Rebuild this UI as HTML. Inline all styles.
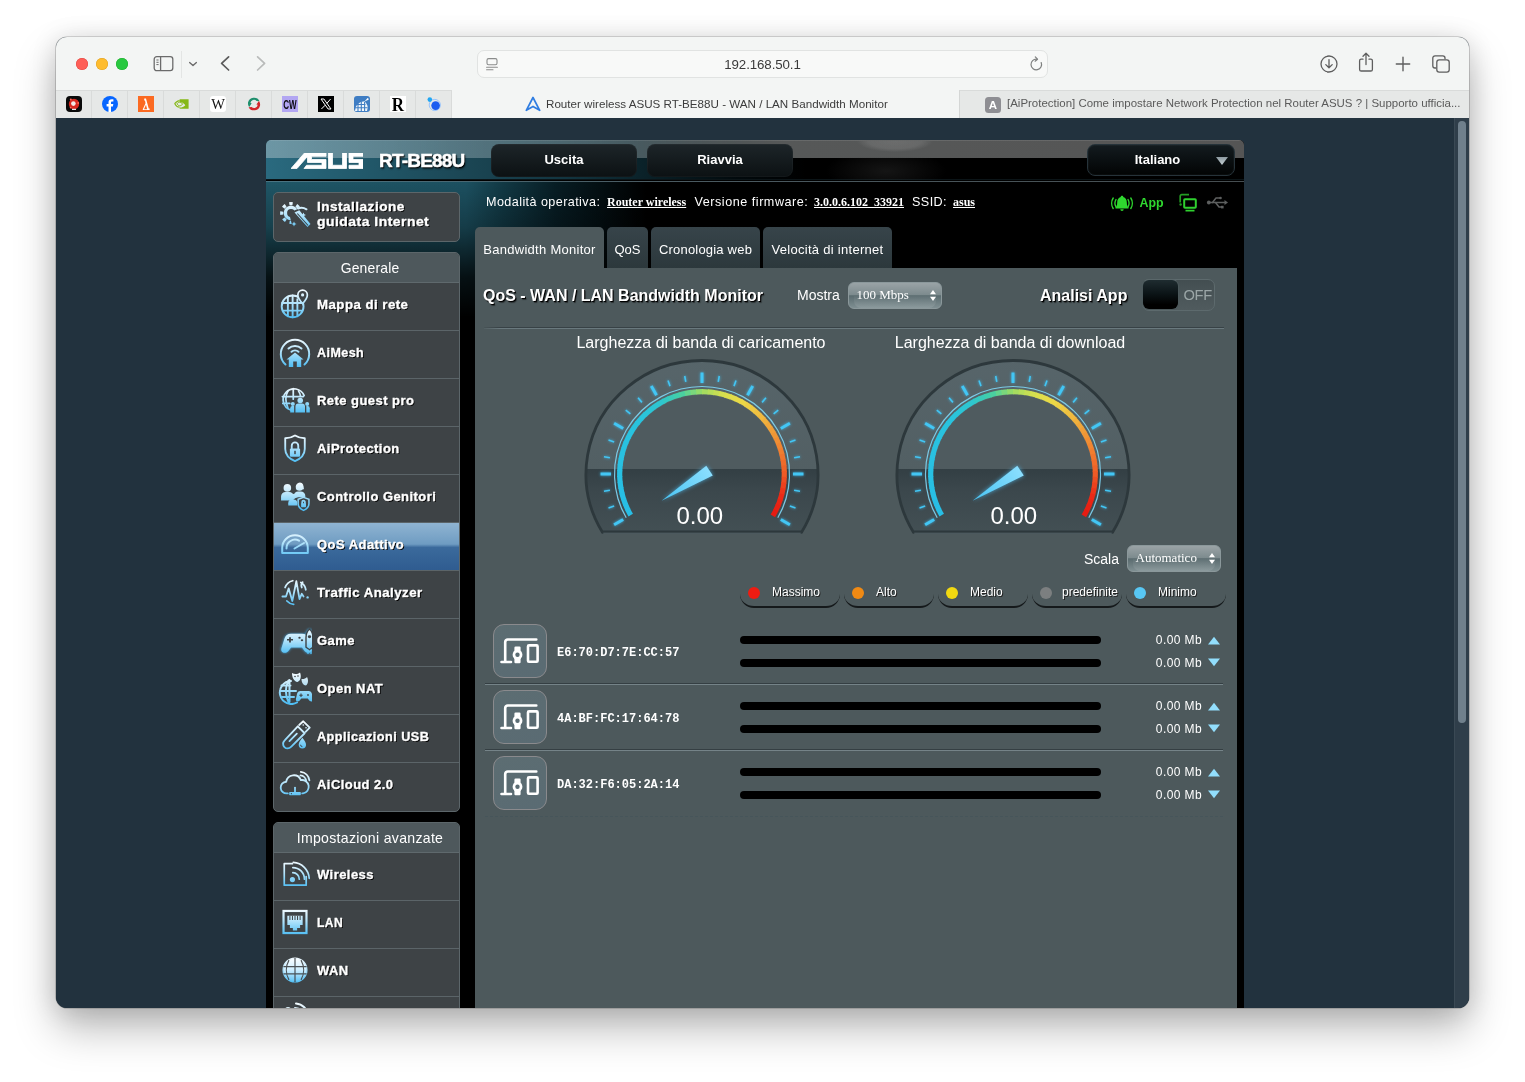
<!DOCTYPE html>
<html>
<head>
<meta charset="utf-8">
<title>Router wireless ASUS RT-BE88U - WAN / LAN Bandwidth Monitor</title>
<style>
*{box-sizing:border-box;margin:0;padding:0}
html,body{width:1525px;height:1082px;overflow:hidden;background:#fff;font-family:"Liberation Sans",sans-serif;}
.abs{position:absolute}
#win{position:absolute;left:56px;top:37px;width:1413px;height:971px;border-radius:11px;background:#22323e;
 box-shadow:0 0 0 .6px rgba(0,0,0,.28),0 21px 42px rgba(0,0,0,.27),0 2px 26px rgba(0,0,0,.13);}
#clip{position:absolute;inset:0;border-radius:11px;overflow:hidden;will-change:transform}
/* safari chrome */
#toolbar{position:absolute;left:0;top:0;width:1413px;height:54px;background:#f3f5f4;border-bottom:1px solid #d9dbda}
#tabbar{position:absolute;left:0;top:54px;width:1413px;height:27px;background:#e6e8e7;}
.tl{position:absolute;top:21px;width:12px;height:12px;border-radius:50%}
.pin{position:absolute;top:0;width:36px;height:27px;border-right:1px solid #d9dbda}
.pin>*{position:absolute;left:10px;top:5px;width:16px;height:16px}
#urlbar{position:absolute;left:421px;top:13px;width:571px;height:28px;border-radius:7px;background:#f8f9f8;border:1px solid #e1e3e2}
/* page */
#page{position:absolute;left:0;top:81px;width:1413px;height:890px;background:#22323e;overflow:hidden}
#sbtrack{position:absolute;left:1398px;top:0;width:15px;height:890px;background:#2f3e4a;border-left:1px solid #3a4954}
#sbthumb{position:absolute;left:1402px;top:3px;width:8px;height:602px;border-radius:4px;background:#70808c}

/* router */
#rt{position:absolute;left:210px;top:22px;width:978px;height:900px;background:#000;border-radius:5px 5px 0 0;overflow:hidden;font-family:"Liberation Sans",sans-serif;color:#fff}
#hd{position:absolute;left:0;top:0;width:979px;height:40px;
 background:linear-gradient(to right,#2a6a7f 0,#225a6c 90px,#1b4654 200px,#123540 300px,#081c22 400px,#020a0d 470px,#000 540px);
 border-bottom:1px solid #0b1417}
#hd:before{content:"";position:absolute;left:0;top:0;width:979px;height:17px;
 background:radial-gradient(ellipse 38px 11px at 629px 0,rgba(255,255,255,.13) 0,rgba(255,255,255,.1) 70%,rgba(255,255,255,0) 100%),
 linear-gradient(to right,rgba(175,195,202,.50) 0,rgba(150,172,180,.46) 200px,rgba(120,135,140,.55) 360px,#565858 520px,#555 100%);
 border-top:1px solid rgba(255,255,255,.10)}
#hd:after{content:"";position:absolute;left:520px;top:17px;width:170px;height:23px;background:radial-gradient(ellipse 60px 22px at 100px 14px,rgba(60,60,60,.35),rgba(0,0,0,0) 100%)}
#hdl{position:absolute;left:0;top:41px;width:979px;height:1px;background:linear-gradient(to right,#4a7482,#4a5a61 400px,#464e51)}
.hbtn{position:absolute;top:4px;height:33px;border-radius:8px;background:linear-gradient(#1d2529,#0c1113);color:#fff;font-weight:bold;font-size:13px;line-height:31px;text-align:center;box-shadow:inset 0 0 0 1px rgba(255,255,255,.03)}
#glow{position:absolute;left:0;top:42px;width:420px;height:150px;background:linear-gradient(to bottom,rgba(0,0,0,0) 0,rgba(0,0,0,.25) 45px,rgba(0,0,0,.8) 95px,#000 135px),linear-gradient(to right,#1f5666 0,#1c5060 200px,#123a46 235px,#071d24 290px,#000 380px)}
.mbox{position:absolute;left:7px;width:187px;background:#3e4346;border:1px solid #5c666a;border-radius:5px;overflow:hidden}
.mhead span{display:inline-block}
.mhead{height:30px;line-height:30px;text-align:center;padding-left:7px;font-size:13.900px;color:#fff;background:#4e585c;border-bottom:1px solid #5f696d;letter-spacing:.2px}
.mi{position:relative;height:48px;border-bottom:1px solid #5b6468;font-weight:bold;font-size:13px;line-height:43px;padding-left:43px;color:#fff;text-shadow:1px 1px 0 #000;letter-spacing:.45px;-webkit-text-stroke:.35px #fff;white-space:nowrap}
.lb{display:inline-block;transform-origin:0 50%}
.mi svg{position:absolute;left:4px;top:4px;width:34px;height:34px}
.mi:last-child{border-bottom:0}
.mi.sel{background:linear-gradient(#8fb4d2 0,#6f9cc2 45%,#3b6a9c 52%,#2f5c90 100%)}
.tab{position:absolute;top:87px;height:41px;border-radius:5px 5px 0 0;background:linear-gradient(#37444a,#2c383c);font-size:13px;line-height:45px;text-align:center;color:#fff;white-space:nowrap}
#main{position:absolute;left:209px;top:128px;width:762px;height:780px;background:#4d595c}

.st{position:absolute;top:53px;height:18px;line-height:18px;font-size:12.600px;color:#fff;white-space:nowrap;letter-spacing:.42px}
.stl{position:absolute;top:53px;height:18px;line-height:19px;font-family:"Liberation Serif",serif;font-weight:bold;font-size:12px;color:#fff;text-decoration:underline;white-space:nowrap}
.h16{font-size:16px;line-height:20px;white-space:nowrap;position:absolute}
.dd{position:absolute;height:27px;border-radius:6px;border:1px solid #8b989b;background:linear-gradient(#9aa3a6 0,#7d8b8e 47%,#5a6b6f 51%,#7f8f92 100%);font-family:"Liberation Serif",serif;font-size:13px;line-height:24px;color:#fff;padding-left:7.500px}
.dd:before{content:"";position:absolute;left:5px;right:5px;top:50%;bottom:0;border-radius:0 0 7px 7px;background:linear-gradient(rgba(255,255,255,.03),rgba(255,255,255,.10))}
.dd span{position:relative}
.lg{position:absolute;top:311px;height:29px;border-radius:0 0 14px 14px;border-bottom:2px solid #15191b;font-size:12px;line-height:27px;color:#fff;text-shadow:1px 1px 0 #222}
.lg i{position:absolute;left:8px;top:8px;width:12px;height:12px;border-radius:50%}
.row{position:absolute;left:10px;width:738px;height:67px;border-bottom:1px solid #758388;box-shadow:inset 0 -1px 0 #353f43}
.row.last{border-bottom:1px dashed #46555a;box-shadow:none}
.dev{position:absolute;left:8px;top:6px;width:54px;height:54px;border-radius:11px;background:linear-gradient(160deg,#5c6d72,#5a6b73);border:1px solid #8a8a8d}
.mac{position:absolute;left:72px;top:27px;font-family:"Liberation Mono",monospace;font-weight:bold;font-size:12px;line-height:16px;color:#fff;white-space:nowrap}
.bar{position:absolute;left:255px;width:361px;height:8px;border-radius:4px;background:#000}
.val{position:absolute;left:639px;width:78px;text-align:right;font-size:12px;line-height:16px;color:#fff;white-space:nowrap;letter-spacing:.4px}
</style>
</head>
<body>
<div id="win"><div id="clip">
 <div id="toolbar">
  <div class="tl" style="left:20px;background:#fe5f57;box-shadow:inset 0 0 0 .5px #e14640"></div>
  <div class="tl" style="left:40px;background:#febc2e;box-shadow:inset 0 0 0 .5px #dfa023"></div>
  <div class="tl" style="left:60px;background:#28c840;box-shadow:inset 0 0 0 .5px #1dad2b"></div>
  
  <!-- sidebar icon -->
  <svg class="abs" style="left:97px;top:18px" width="22" height="18" viewBox="0 0 22 18" fill="none" stroke="#6b6b6b" stroke-width="1.3"><rect x="1.2" y="1.7" width="18.6" height="14" rx="2.6"/><path d="M7.6 1.7v14"/><path d="M3.4 5h2.2M3.4 7.3h2.2M3.4 9.6h2.2" stroke-width="1"/></svg>
  <div class="abs" style="left:125px;top:14px;width:1px;height:27px;background:#e3e5e4"></div>
  <svg class="abs" style="left:131px;top:23px" width="12" height="8" viewBox="0 0 12 8" fill="none" stroke="#6b6b6b" stroke-width="1.4" stroke-linecap="round" stroke-linejoin="round"><path d="M2.6 2.6L6 5.6l3.4-3"/></svg>
  <svg class="abs" style="left:162px;top:17px" width="14" height="18" viewBox="0 0 14 18" fill="none" stroke="#5b5b5b" stroke-width="1.7" stroke-linecap="round" stroke-linejoin="round"><path d="M10.6 2.8L3.6 9.4l7 6.6"/></svg>
  <svg class="abs" style="left:198px;top:17px" width="14" height="18" viewBox="0 0 14 18" fill="none" stroke="#b9bbba" stroke-width="1.7" stroke-linecap="round" stroke-linejoin="round"><path d="M3.6 2.8l7 6.6-7 6.6"/></svg>
  <!-- right icons -->
  <svg class="abs" style="left:1263px;top:17px" width="20" height="20" viewBox="0 0 20 20" fill="none" stroke="#5e5e5e" stroke-width="1.3" stroke-linecap="round" stroke-linejoin="round"><circle cx="10" cy="10" r="8"/><path d="M10 5.6v8M6.8 10.6l3.2 3.2 3.2-3.2"/></svg>
  <svg class="abs" style="left:1300px;top:13px" width="20" height="24" viewBox="0 0 20 24" fill="none" stroke="#5e5e5e" stroke-width="1.3" stroke-linecap="round" stroke-linejoin="round"><path d="M7 9.2H5.2a1.6 1.6 0 0 0-1.6 1.6v8.600a1.600 1.600 0 0 0 1.600 1.600h9.600a1.600 1.600 0 0 0 1.600-1.600v-8.600a1.600 1.600 0 0 0-1.600-1.600H13"/><path d="M10 14.500V3.600M7 6.300l3-3 3 3"/></svg>
  <svg class="abs" style="left:1338px;top:18px" width="18" height="18" viewBox="0 0 18 18" fill="none" stroke="#5e5e5e" stroke-width="1.4" stroke-linecap="round"><path d="M9 2.300v13.400M2.300 9h13.400"/></svg>
  <svg class="abs" style="left:1374px;top:16px" width="22" height="22" viewBox="0 0 22 22" fill="none" stroke="#5e5e5e" stroke-width="1.3" stroke-linejoin="round"><path d="M6.200 15H5a2.200 2.200 0 0 1-2.200-2.200V5A2.200 2.200 0 0 1 5 2.800h7.800A2.200 2.200 0 0 1 15 5v1.200"/><rect x="6.800" y="6.800" width="12.400" height="12.400" rx="2.400"/></svg>

  <div id="urlbar">
   <svg class="abs" style="left:6px;top:5px" width="16" height="16" viewBox="0 0 16 16" fill="none" stroke="#8a8c8b" stroke-width="1.100" stroke-linecap="round"><rect x="3" y="2.600" width="10" height="6.200" rx="1.600"/><path d="M2.600 11.300h10.800M2.600 13.800h6.400"/></svg>
   <div class="abs" style="left:0;top:0;width:569px;height:26px;line-height:27px;text-align:center;font-size:13.300px;color:#3a3a3a;letter-spacing:-.1px">192.168.50.1</div>
   <svg class="abs" style="left:549px;top:4px" width="18" height="18" viewBox="0 0 18 18" fill="none" stroke="#7d7f7e" stroke-width="1.200" stroke-linecap="round" stroke-linejoin="round"><path d="M9.800 4.200a5.300 5.300 0 1 0 4.400 3.300"/><path d="M8.300 1.900l2.200 2.300-2.400 2"/></svg>
  </div>
 </div>
 <div id="tabbar">
  <div class="pin" style="left:0px"><svg viewBox="0 0 16 16"><rect width="16" height="16" rx="4" fill="#0a0a0a"/><circle cx="8" cy="8" r="5.200" fill="#d8281f"/><circle cx="7.400" cy="7.600" r="2.300" fill="#f3e9e6"/><circle cx="4.800" cy="3.600" r="1" fill="#ff6a5a"/><circle cx="12.200" cy="7" r=".9" fill="#ff6a5a"/><circle cx="4.600" cy="11.600" r=".9" fill="#ff6a5a"/><rect x="6" y="12.800" width="4" height="1.200" fill="#e8e8e8"/></svg></div>
<div class="pin" style="left:36px"><svg viewBox="0 0 16 16"><circle cx="8" cy="8" r="8" fill="#0866ff"/><path d="M9 16V10.400h1.900l.4-2.300H9V6.700c0-.8.300-1.300 1.300-1.300h1.100V3.300c-.3 0-1-.1-1.800-.1-1.900 0-3.100 1.100-3.100 3.200v1.700H4.600v2.300h1.900V15.900z" fill="#fff"/></svg></div>
<div class="pin" style="left:72px"><svg viewBox="0 0 16 16"><rect width="16" height="16" fill="#fb6a22"/><path d="M6.300 2.400h1.700l2.700 10.200h.9v1.400H9.300L8 8.800l-2 4.400h4.500v.8H4.800v-.8l2.700-6-.5-2.600h-.9z" fill="#fff"/></svg></div>
<div class="pin" style="left:108px"><svg viewBox="0 0 16 16"><path d="M5.600 3.200H14.600v9.600H5.600v-1.200c3.400.2 5.800-2.300 5.800-2.300S9.200 6 5.600 6z" fill="#86b817"/><path d="M5.600 4.600C2.600 4.900.8 7.700.8 7.700s1.600 3.300 4.800 3.600" fill="none" stroke="#86b817" stroke-width="1.100"/><path d="M5.600 6.200C3.900 6.400 3 7.800 3 7.800s.9 1.800 2.600 2c1.800.2 3-1.700 3-1.700S7.500 6 5.600 6.200z" fill="none" stroke="#86b817" stroke-width="1"/></svg></div>
<div class="pin" style="left:144px"><svg viewBox="0 0 16 16"><rect width="16" height="16" rx="3" fill="#fff"/><text x="8" y="12.600" text-anchor="middle" font-family="Liberation Serif" font-size="14.500" fill="#111">W</text></svg></div>
<div class="pin" style="left:180px"><svg viewBox="0 0 16 16"><path d="M13.600 5.200A6.200 6.200 0 0 0 2 6.600c-.2 1.800.3 3.200 1.200 4.300l2.500-3.600-1.300-.2A3.600 3.600 0 0 1 10.600 5z" fill="#1f8f6d"/><path d="M2.600 11.200a6.200 6.200 0 0 0 11.500-2c.2-1.800-.3-3.200-1.200-4.300L10.400 8.600l1.300.2A3.600 3.600 0 0 1 5.600 11z" fill="#d3262c"/></svg></div>
<div class="pin" style="left:216px"><svg viewBox="0 0 16 16"><rect width="16" height="16" fill="#b2a6f2"/><text x="8" y="13" text-anchor="middle" font-family="Liberation Sans" font-weight="bold" font-size="12.500" fill="#0d0d12" textLength="13.500" lengthAdjust="spacingAndGlyphs" transform="scale(1,1.080) translate(0,-.8)">CW</text></svg></div>
<div class="pin" style="left:252px"><svg viewBox="0 0 16 16"><rect width="16" height="16" fill="#000"/><path d="M3 3h2.900l7.100 10h-2.900z" fill="none" stroke="#fff" stroke-width="1"/><path d="M12.600 3L8.800 7.400M7.200 9.200L3.400 13" stroke="#fff" stroke-width="1"/></svg></div>
<div class="pin" style="left:288px"><svg viewBox="0 0 16 16"><rect width="16" height="16" rx="3" fill="#3f7dc3"/><path d="M1 15A9.500 9.500 0 0 1 10.500 5.200 9 9 0 0 1 13 15z" fill="#fff" opacity=".92"/><path d="M1.500 8.500h10M1 11.700h12.500M4 6.500V15M7.300 5.500V15M10.600 6V15" stroke="#3f7dc3" stroke-width="1.100"/><path d="M10.500 5.500L13.600 2c.9.300 1.200.9.900 1.800z" fill="#fff"/></svg></div>
<div class="pin" style="left:324px"><svg viewBox="0 0 16 16"><rect width="16" height="16" fill="#fff"/><text x="8" y="14.600" text-anchor="middle" font-family="Liberation Serif" font-weight="bold" font-size="18.500" fill="#000" transform="scale(.92,1) translate(.7,0)">R</text></svg></div>
<div class="pin" style="left:360px"><svg viewBox="0 0 16 16"><circle cx="8.800" cy="9" r="5.600" fill="none" stroke="#8fc0ff" stroke-width=".9"/><circle cx="9.600" cy="9.600" r="4.300" fill="#1a5cf0"/><circle cx="3.800" cy="3.600" r="2.300" fill="#22a7f2"/></svg></div>

  <div class="abs" style="left:396px;top:-1px;width:508px;height:28px;background:#f3f5f4;border-right:1px solid #d4d6d5"></div>
  <svg class="abs" style="left:468px;top:4px" width="18" height="18" viewBox="0 0 18 18" fill="none" stroke="#2f7de1" stroke-width="1.700" stroke-linejoin="round" stroke-linecap="round"><path d="M2.300 15.300L9 2.500l6.700 12.800-6.700-3.900z"/></svg>
  <div class="abs" id="t1" style="left:490px;top:0;height:27px;line-height:25px;font-size:11.630px;color:#3c3c3c;white-space:nowrap">Router wireless ASUS RT-BE88U - WAN / LAN Bandwidth Monitor</div>
  <div class="abs" style="left:929px;top:6px;width:16px;height:16px;border-radius:3.500px;background:#8e8e93;color:#fff;font-weight:bold;font-size:11.500px;line-height:16px;text-align:center">A</div>
  <div class="abs" id="t2" style="left:951px;top:0;height:27px;line-height:25px;font-size:11.480px;color:#5a5a5a;white-space:nowrap">[AiProtection] Come impostare Network Protection nel Router ASUS ? | Supporto ufficia...</div>

 </div>
 <div id="page">
  
<div id="rt">
 <div id="hd"></div><div id="hdl"></div>
 <div id="glow"></div>
 <!-- ASUS logo -->
 <svg class="abs" style="left:25px;top:13px" width="72" height="16" viewBox="0 0 144 32" fill="#fff" stroke="#fff" stroke-width="1.600" stroke-linejoin="round">
  <path d="M0 31L27 0h12L12 31z"/>
  <path d="M33 0h37v6.500H41v6.500h29V31H26l5-6.500h31v-5.500H33z"/>
  <path d="M75 0h8v24.500h20V0h8v31H75z"/>
  <path d="M116 0h28v6.500h-20v6.500h20V31h-28v-6.500h20v-5.500h-20z"/>
  <path d="M22 13h52v1.400H21z" fill="#1d4c5c" opacity=".0"/>
 </svg>
 <div class="abs" style="left:113px;top:9px;font-weight:bold;font-size:19px;line-height:24px;letter-spacing:-.8px;-webkit-text-stroke:.5px #fff;text-shadow:1px 1px 1px #000,1px 2px 2px rgba(0,0,0,.6)">RT-BE88U</div>
 <div class="hbtn" style="left:225px;width:146px">Uscita</div>
 <div class="hbtn" style="left:381px;width:146px">Riavvia</div>
 <div class="hbtn" style="left:821px;top:4px;height:32px;width:148px;border:1px solid #26333a;background:linear-gradient(#131b1f,#020404);line-height:30px"><span style="position:absolute;left:0;width:139px">Italiano</span>
  <svg class="abs" style="left:127px;top:11px" width="14" height="10" viewBox="0 0 14 10"><defs><linearGradient id="tg" x1="0" y1="0" x2="0" y2="1"><stop offset="0" stop-color="#8d9aa0"/><stop offset="1" stop-color="#c5d0d5"/></linearGradient></defs><path d="M1 1h12L7 9z" fill="url(#tg)"/></svg></div>
 <!--SB0--><svg width="0" height="0" style="position:absolute"><defs><linearGradient id="ig" gradientUnits="userSpaceOnUse" x1="0" y1="2" x2="0" y2="32"><stop offset="0" stop-color="#f4fbff"/><stop offset=".45" stop-color="#b5e4fb"/><stop offset="1" stop-color="#4fbdf3"/></linearGradient><linearGradient id="ig2" gradientUnits="userSpaceOnUse" x1="0" y1="2" x2="0" y2="32"><stop offset="0" stop-color="#ffffff"/><stop offset=".5" stop-color="#cdeeff"/><stop offset="1" stop-color="#53bff4"/></linearGradient></defs></svg>
 <div class="mbox" style="top:52px;height:50px">
  <div class="mi" style="height:48px;border:0;line-height:15px;padding-top:6px"><svg viewBox="0 0 34 34" style="top:6px;left:5px"><circle cx="12" cy="14" r="5.600" fill="none" stroke="url(#ig)" stroke-width="3.400"/><circle cx="12" cy="14" r="9.300" fill="none" stroke="url(#ig)" stroke-width="3.200" stroke-dasharray="3.300 4" transform="rotate(-12 12 14)"/><path d="M10 14L22 8.500 34 30H14z" fill="#3e4346"/><path d="M15.500 13.500l4.800-2.200L31.500 25l-3 3z" fill="url(#ig)"/><path d="M18.300 14.500l10.800 12" stroke="#3e4346" stroke-width="1.100"/><path d="M19 9.500c3-1.200 6-.8 8.500.8" stroke="url(#ig)" fill="none" stroke-width="2" stroke-linecap="round" stroke-linejoin="round" stroke-width="1.300"/><path d="M24.500 13.500l.8 1.700 1.700.8-1.700.8-.8 1.700-.8-1.700-1.700-.8 1.700-.8z M15 22.500l.8 1.700 1.700.8-1.700.8-.8 1.700-.8-1.700-1.700-.8 1.700-.8z" fill="url(#ig)"/></svg><span class="lb" id="lb_w1" style="transform:scaleX(1.046)">Installazione</span><br><span class="lb" id="lb_w2" style="transform:scaleX(1.072)">guidata Internet</span></div>
 </div>
 <div class="mbox" style="top:112px;height:560px">
  <div class="mhead"><span id="mh1">Generale</span></div>
<div class="mi"><svg viewBox="0 0 34 34"><g transform="translate(17 17) scale(0.95) translate(-17 -17)"><g stroke="url(#ig)" fill="none" stroke-width="2" stroke-linecap="round" stroke-linejoin="round" stroke-width="1.800"><circle cx="14.500" cy="19.500" r="11.500"/><path d="M3.500 16h22M4.500 24h20M9.500 9.500v20.500M14.500 8v23M19.500 12v18"/></g><path d="M25 2.500a5 5 0 0 1 5 5c0 3.600-5 9-5 9s-5-5.400-5-9a5 5 0 0 1 5-5z" fill="#3e4346" stroke="url(#ig)" stroke-width="1.800"/><circle cx="25" cy="7.500" r="1.700" fill="url(#ig)"/></g></svg><span class="lb" id="lb_map" style="transform:scaleX(1.02)">Mappa di rete</span></div>
<div class="mi"><svg viewBox="0 0 34 34"><g stroke="url(#ig)" fill="none" stroke-width="2" stroke-linecap="round" stroke-linejoin="round" stroke-width="2.200"><path d="M7.500 29.500A14.200 14.200 0 1 1 26.500 29.500"/></g><g stroke="url(#ig)" fill="none" stroke-width="2" stroke-linecap="round" stroke-linejoin="round" stroke-width="1.900"><path d="M10.500 13.500a9.500 9.500 0 0 1 13 0M13.500 16.800a5.200 5.200 0 0 1 7 0"/></g><path d="M17 17.500l8.500 7h-2.300v7.500h-12.400v-7.500H8.500z" fill="url(#ig)"/><rect x="15.200" y="26.500" width="3.600" height="5.500" fill="#3e4346"/></svg><span class="lb" id="lb_mesh" style="transform:scaleX(0.963)">AiMesh</span></div>
<div class="mi"><svg viewBox="0 0 34 34"><g transform="translate(17 17) scale(0.87) translate(-17 -17)"><g stroke="url(#ig)" fill="none" stroke-width="2" stroke-linecap="round" stroke-linejoin="round" stroke-width="1.700"><path d="M12 28.500A12.500 12.500 0 1 1 27.500 12"/><path d="M2.500 13h24M3 21h8M9 6.500c-3 5-3 13 0 20M15 4v12M21 6.500c1.300 2 2 4 2.300 6"/></g><g fill="url(#ig)"><circle cx="23" cy="17.500" r="3.200"/><path d="M17.500 31.500v-7a3.500 3.500 0 0 1 3.500-3.500h4a3.500 3.500 0 0 1 3.500 3.500v7z"/><circle cx="14.500" cy="21.500" r="2.300"/><path d="M11.500 31.500v-5a2.500 2.500 0 0 1 2.500-2.500h2v7.500z"/><circle cx="31" cy="21.500" r="2.300"/><path d="M30 24h1.500a2.500 2.500 0 0 1 2.500 2.500v5h-4z"/></g></g></svg><span class="lb" id="lb_guest">Rete guest pro</span></div>
<div class="mi"><svg viewBox="0 0 34 34"><g transform="translate(17 17) scale(0.93) translate(-17 -17)"><g stroke="url(#ig)" fill="none" stroke-width="2" stroke-linecap="round" stroke-linejoin="round" stroke-width="2.200"><path d="M17 3.500c3.500 2.200 7 3 10.500 3v11.500c0 6-4.500 10.500-10.500 13-6-2.500-10.500-7-10.500-13V6.500c3.500 0 7-.8 10.500-3z"/></g><g stroke="url(#ig)" fill="none" stroke-width="2" stroke-linecap="round" stroke-linejoin="round" stroke-width="2"><path d="M13.500 17.500v-3a3.500 3.500 0 0 1 7 0v3"/></g><rect x="11.500" y="17.500" width="11" height="9" rx="1.200" fill="url(#ig)"/><rect x="16.200" y="20" width="1.600" height="3.600" fill="#3e4346"/></g></svg><span class="lb" id="lb_prot">AiProtection</span></div>
<div class="mi"><svg viewBox="0 0 34 34"><g transform="translate(17 17) scale(0.9) translate(-17 -17)"><g fill="url(#ig)"><circle cx="8.500" cy="8" r="4.200"/><path d="M1.500 22v-4.500a5 5 0 0 1 5-5h4a5 5 0 0 1 5 5V22z"/><circle cx="22" cy="7" r="4.200"/><path d="M19 4.500c1.500-3.500 5.500-3.500 7 0l1 5h-9z"/><path d="M15.500 20v-3a5 5 0 0 1 5-5h3a5 5 0 0 1 5 5v1.500h-8z"/><circle cx="14.500" cy="17.500" r="3"/><path d="M9.500 27.500V25a4 4 0 0 1 4-4h2a4 4 0 0 1 4 4v2.500z"/></g><path d="M26.500 18.500l6 2.200v5c0 3.300-2.500 5.800-6 7.300-3.500-1.500-6-4-6-7.300v-5z" fill="#3e4346" stroke="url(#ig)" stroke-width="1.700"/><rect x="23.800" y="25" width="5.400" height="4.400" rx=".6" fill="url(#ig)"/><path d="M25 25v-1.300a1.500 1.500 0 0 1 3 0V25" stroke="url(#ig)" fill="none" stroke-width="2" stroke-linecap="round" stroke-linejoin="round" stroke-width="1.200"/></g></svg><span class="lb" id="lb_parent">Controllo Genitori</span></div>
<div class="mi sel"><svg viewBox="0 0 34 34"><g stroke="url(#ig)" fill="none" stroke-width="2" stroke-linecap="round" stroke-linejoin="round" stroke-width="2.800"><path d="M4.200 26V21a12.800 12.800 0 0 1 25.600 0v5z"/></g><g stroke="url(#ig)" fill="none" stroke-width="2" stroke-linecap="round" stroke-linejoin="round" stroke-width="1.800"><path d="M8.500 21.500a8.500 8.500 0 0 1 12.500-7.800"/><path d="M16.500 21.500l9.500-5.500"/></g></svg><span class="lb" id="lb_qos">QoS Adattivo</span></div>
<div class="mi"><svg viewBox="0 0 34 34"><g transform="translate(17 17) scale(0.9) translate(-17 -17)"><g stroke="url(#ig)" fill="none" stroke-width="2" stroke-linecap="round" stroke-linejoin="round" stroke-width="2"><path d="M3 22h4l3-9 4 14 4.500-22 3.500 20 2.500-6 2 3"/></g><g stroke="url(#ig)" fill="none" stroke-width="2" stroke-linecap="round" stroke-linejoin="round" stroke-width="1.500"><path d="M6 12c1.500-4 4.500-6.500 8.500-7.500M23.500 6.500c3 1.800 5 4.500 5.500 8M8 27c2 2.200 4.500 3.500 7.500 3.800M24.500 12c-1-2.500-.5-4.500 1-6"/></g><circle cx="31" cy="23" r="1.300" fill="url(#ig)"/></g></svg><span class="lb" id="lb_traffic" style="transform:scaleX(1.02)">Traffic Analyzer</span></div>
<div class="mi"><svg viewBox="0 0 34 34"><g transform="translate(2.500 3.500) scale(1 .86)" style="filter:drop-shadow(0 0 1.500px rgba(70,190,255,.9))"><path d="M7.500 8.500h14c3.500 0 5.500 2 6.500 5.500l3 11c.8 3-.5 5.500-3 5.500-2 0-3-1-4.500-3l-2-3h-11l-2 3c-1.500 2-2.500 3-4.500 3-2.500 0-3.800-2.500-3-5.500l3-11c1-3.500 3-5.500 6.500-5.500z" fill="url(#ig)"/><path d="M9.500 12.500v6M6.500 15.500h6" stroke="#3e4346" stroke-width="1.800"/><circle cx="19" cy="13" r="1.200" fill="#3e4346"/><circle cx="21.500" cy="16" r="1.200" fill="#3e4346"/><path d="M29 3c2.500 2.500 3.500 6 3.500 10v11l-3.500 3-3.500-3V13c0-4 1-7.500 3.500-10z" fill="url(#ig)" stroke="#3e4346" stroke-width="1.400"/><circle cx="29" cy="12" r="1.700" fill="#3e4346"/><path d="M27.500 27v5M30.500 27v5" stroke="url(#ig)" stroke-width="1.300"/></g></svg><span class="lb" id="lb_game">Game</span></div>
<div class="mi"><svg viewBox="0 0 34 34"><g stroke="url(#ig)" fill="none" stroke-width="2" stroke-linecap="round" stroke-linejoin="round" stroke-width="1.700"><path d="M19 31.500A11.500 11.500 0 1 1 13 10"/><path d="M2 20h16M3.500 14.500h9M4 26h12M10.500 9.500c-3.500 6-3.500 15 0 21.500M11.500 9v22"/></g><g fill="url(#ig)"><path d="M14 2c2.500 1.500 5.500 1.500 8-.5 1.500 3.500 1 8-2.500 9.500-3.500-.5-5.500-4.500-5.500-9z"/><path d="M23.500 8c2 .3 4-.3 5.500-2 1.500 2.800 1.500 6.500-1 8.500-2.800 0-4.500-3-4.500-6.500z" opacity=".95"/><path d="M22.500 20h8c2 0 3 1 3.500 3l1 4.500c.4 1.800-.3 3-1.700 3-1.100 0-1.800-.6-2.600-1.700l-1-1.300h-6.400l-1 1.300c-.8 1.100-1.500 1.700-2.600 1.700-1.400 0-2.100-1.200-1.700-3l1-4.500c.5-2 1.500-3 3.500-3z"/></g><circle cx="17" cy="5.500" r=".8" fill="#3e4346"/><circle cx="20" cy="5" r=".8" fill="#3e4346"/><path d="M23 22.500v3.400M21.300 24.200h3.400" stroke="#3e4346" stroke-width="1.100"/><circle cx="30" cy="24" r=".9" fill="#3e4346"/></svg><span class="lb" id="lb_nat">Open NAT</span></div>
<div class="mi"><svg viewBox="0 0 34 34"><g transform="translate(17 17) scale(0.92) translate(-17 -17)"><g stroke="url(#ig)" fill="none" stroke-width="2" stroke-linecap="round" stroke-linejoin="round" stroke-width="2.200"><path d="M20 6.500l7.500 7.500L13 28.500c-2.500 2.500-5.500 2.500-7.500.5s-2-5 .5-7.500z"/></g><g stroke="url(#ig)" fill="none" stroke-width="2" stroke-linecap="round" stroke-linejoin="round" stroke-width="1.800"><path d="M21.500 5l4.500-4 7 7-4.500 4.500"/><path d="M11 22.500l8-8"/></g><circle cx="26" cy="5" r=".9" fill="url(#ig)"/><circle cx="29" cy="8" r=".9" fill="url(#ig)"/><path d="M25 19c2 2.500 4 5 4 7.500a4 4 0 0 1-8 0c0-2.500 2-5 4-7.500z" fill="url(#ig)"/><path d="M23 26.500a2 2 0 0 0 2 2" stroke="#3e4346" stroke-width="1" fill="none"/></g></svg><span class="lb" id="lb_usb" style="transform:scaleX(0.978)">Applicazioni USB</span></div>
<div class="mi"><svg viewBox="0 0 34 34"><g transform="translate(17 17) scale(0.9) translate(-17 -17)"><g stroke="url(#ig)" fill="none" stroke-width="2" stroke-linecap="round" stroke-linejoin="round" stroke-width="2.200"><path d="M9 27.500H8a6.500 6.500 0 0 1-.8-13 8.500 8.500 0 0 1 16.300-1.800 7.500 7.500 0 0 1 2.500 14.800h-1"/></g><g stroke="url(#ig)" fill="none" stroke-width="2" stroke-linecap="round" stroke-linejoin="round" stroke-width="1.700"><path d="M23 7.500a7 7 0 0 1 6.500 6.500M23.500 3.500A11 11 0 0 1 33 13"/></g><rect x="10.500" y="26" width="13" height="3.600" rx=".8" fill="url(#ig)"/><path d="M17 26v-5" stroke="url(#ig)" fill="none" stroke-width="2" stroke-linecap="round" stroke-linejoin="round" stroke-width="1.500"/><circle cx="13" cy="27.800" r=".7" fill="#3e4346"/></g></svg><span class="lb" id="lb_cloud">AiCloud 2.0</span></div>
</div>
 <div class="mbox" style="top:682px;height:300px">
  <div class="mhead"><span id="mh2" style="font-size:14.100px;letter-spacing:.3px">Impostazioni avanzate</span></div>
<div class="mi"><svg viewBox="0 0 34 34"><g transform="translate(17 17) scale(0.86) translate(-17 -17)"><g stroke="url(#ig)" fill="none" stroke-width="2" stroke-linecap="round" stroke-linejoin="round" stroke-width="2"><path d="M14 5H4.500v25H30V20"/></g><g stroke="url(#ig)" fill="none" stroke-width="2" stroke-linecap="round" stroke-linejoin="round" stroke-width="2.600"><path d="M14.500 15.500a7.500 7.500 0 0 1 7.500 7.500M14.500 9.500A13.500 13.500 0 0 1 28 23M15 3.500A19.500 19.500 0 0 1 33.500 22"/></g><circle cx="14" cy="23.500" r="3" fill="url(#ig)"/></g></svg><span class="lb" id="lb_wifi">Wireless</span></div>
<div class="mi"><svg viewBox="0 0 34 34"><g transform="translate(17 17) scale(0.85) translate(-17 -17)"><rect x="3.500" y="4" width="27" height="26" fill="none" stroke="url(#ig)" stroke-width="2.600"/><path d="M8 9.500h18v11h-3v3.500h-3.500V27h-5v-3h-3.500v-3.500H8z" fill="url(#ig)"/><path d="M11 9.500v5M14 9.500v5M17 9.500v5M20 9.500v5M23 9.500v5" stroke="#3e4346" stroke-width="1.200"/></g></svg><span class="lb" id="lb_lan" style="transform:scaleX(0.93)">LAN</span></div>
<div class="mi"><svg viewBox="0 0 34 34"><g transform="translate(17 17) scale(0.86) translate(-17 -17)"><circle cx="17" cy="17" r="13.800" fill="url(#ig2)" stroke="url(#ig)" stroke-width="1.600"/><g fill="none" stroke="#3e4346" stroke-width="1.400" opacity=".9"><path d="M3.500 13h27M3.500 21.500h27M17 3v28M10 5.500c-4 7-4 16 0 23M24 5.500c4 7 4 16 0 23"/></g></g></svg><span class="lb" id="lb_wan">WAN</span></div>
<div class="mi"><svg viewBox="0 0 34 34"><g stroke="url(#ig)" fill="none" stroke-width="2" stroke-linecap="round" stroke-linejoin="round" stroke-width="2"><path d="M17 7a9 9 0 0 1 9 9M18 2.500a13 13 0 0 1 12 12"/></g><circle cx="10" cy="9" r="3" fill="url(#ig)"/><circle cx="22" cy="12" r="1.500" fill="url(#ig)"/></svg><span class="lb" id="lb_alexa">Amazon Alexa</span></div>
</div>
<!--SB1-->
 
 <div class="st" id="s1" style="left:220px">Modalità operativa:</div>
 <div class="stl" id="s2" style="left:341px">Router wireless</div>
 <div class="st" id="s3" style="left:428.500px;letter-spacing:.53px">Versione firmware:</div>
 <div class="stl" id="s4" style="left:548px">3.0.0.6.102_33921</div>
 <div class="st" id="s5" style="left:646px">SSID:</div>
 <div class="stl" id="s6" style="left:687px">asus</div>
 
 <svg class="abs" style="left:844px;top:55px" width="24" height="17" viewBox="0 0 24 17"><g fill="none" stroke="#2fd82f" stroke-width="1.400" stroke-linecap="round"><path d="M6 4.500c-1.300 2.200-1.300 5.300 0 7.500M3.200 3C1.200 6 1.200 10.500 3.200 13.500M18 4.500c1.300 2.200 1.300 5.300 0 7.500M20.800 3c2 3 2 7.500 0 10.500"/></g><path d="M12 .8c.8 0 1.300.5 1.300 1.200 2.300.7 3.500 2.600 3.500 5.200 0 3 .7 4.200 1.700 5.200v1H5.500v-1c1-1 1.700-2.200 1.700-5.200 0-2.600 1.200-4.500 3.500-5.200C10.700 1.300 11.200.8 12 .8zM10.300 14.300h3.400a1.700 1.700 0 0 1-3.400 0z" fill="#2fd82f"/></svg>
 <div class="abs" style="left:873.500px;top:54px;font-weight:bold;font-size:12.400px;line-height:18px;color:#2fd82f">App</div>
 <svg class="abs" style="left:912px;top:53px" width="20" height="19" viewBox="0 0 20 19" fill="none" stroke="#2fd02f"><path d="M2.200 9.500V3.200a1.500 1.500 0 0 1 1.500-1.500H11" stroke-width="1.700" opacity=".75"/><circle cx="2.600" cy="11.500" r="1.200" fill="#2fd02f" stroke="none" opacity=".75"/><rect x="6.200" y="6.300" width="11.600" height="8.400" rx=".8" stroke-width="2"/><path d="M7.500 17.600h9" stroke-width="1.800"/></svg>
 <svg class="abs" style="left:940px;top:55px" width="23" height="15" viewBox="0 0 23 15" fill="none" stroke="#5d5f5f" stroke-width="1.500" stroke-linecap="round" stroke-linejoin="round"><path d="M3.500 7.500H19"/><path d="M6.500 7.500L10 3h4M9.500 7.500L13 12h3"/><circle cx="2.800" cy="7.500" r="1.900" fill="#5d5f5f" stroke="none"/><path d="M18.500 5l3.500 2.500-3.500 2.500z" fill="#5d5f5f" stroke="none"/><circle cx="14.500" cy="3" r="1.300" fill="#5d5f5f" stroke="none"/><rect x="15" y="10.800" width="2.600" height="2.600" fill="#5d5f5f" stroke="none"/></svg>

 <div class="tab" id="tb1" style="left:209px;width:129px;background:#4d595c;letter-spacing:.27px">Bandwidth Monitor</div>
 <div class="tab" id="tb2" style="left:341px;width:41px">QoS</div>
 <div class="tab" id="tb3" style="left:385px;width:109px;letter-spacing:.2px">Cronologia web</div>
 <div class="tab" id="tb4" style="left:497px;width:129px;letter-spacing:.28px">Velocità di internet</div>

 
 <div id="main">
  <div class="h16" id="ttl" style="left:8px;top:18px;font-weight:bold;text-shadow:1px 1px 0 #000,1.500px 1.500px 1px rgba(0,0,0,.45)">QoS - WAN / LAN Bandwidth Monitor</div>
  <div class="abs" id="mostra" style="left:322px;top:18px;font-size:14px;line-height:18px">Mostra</div>
  <div class="dd" style="left:373px;top:14px;width:94px"><span>100 Mbps</span><svg class="abs" style="left:80px;top:6px" width="8" height="13" viewBox="0 0 8 13" fill="#fff"><path d="M4 1l3 4.200H1zM4 12l3-4.200H1z"/></svg></div>
  <div class="h16" id="aapp" style="left:565px;top:18px;font-weight:bold;text-shadow:1px 1px 0 #000,1.500px 1.500px 1px rgba(0,0,0,.45)">Analisi App</div>
  <div class="abs" style="left:667px;top:11px;width:73px;height:32px;border-radius:7px;background:linear-gradient(#434e51,#505b5e);border:1px solid #5d6a6d"></div>
  <div class="abs" style="left:667px;top:11px;width:37px;height:31px;border-radius:7px;background:linear-gradient(#1f2c30 0,#0c1518 45%,#000 85%);border:1px solid #4b585b;border-top-color:#5a676a"></div>
  <div class="abs" id="off" style="left:708.500px;top:17.500px;font-size:14.700px;line-height:19px;color:#9ba6a7;letter-spacing:-.3px">OFF</div>
  <div class="abs" style="left:9px;top:59px;width:740px;height:2px;background:linear-gradient(#384246 50%,#6a797e 50%);-webkit-mask-image:linear-gradient(to right,rgba(0,0,0,.2),#000 16px)"></div>
  <div class="h16" id="g1t" style="left:76px;top:65px;width:300px;text-align:center">Larghezza di banda di caricamento</div>
  <div class="h16" id="g2t" style="left:385px;top:65px;width:300px;text-align:center">Larghezza di banda di download</div>
  <!--G0--><svg class="abs" style="left:107px;top:88px" width="240" height="190" viewBox="0 0 240 190">
 <defs>
  <clipPath id="gc107"><path d="M20.29 176A116 113.500 0 1 1 219.71 176Z"/></clipPath>
  <linearGradient id="gt107" x1="0" y1="0" x2="0" y2="1"><stop offset="0" stop-color="#57656a"/><stop offset="1" stop-color="#525f63"/></linearGradient>
  <linearGradient id="gb107" x1="0" y1="0" x2="0" y2="1"><stop offset="0" stop-color="#333f44"/><stop offset=".25" stop-color="#3b474c"/><stop offset="1" stop-color="#465357"/></linearGradient>
  <linearGradient id="gn107" gradientUnits="userSpaceOnUse" x1="79.3" y1="141.5" x2="130.4" y2="112.0"><stop offset="0" stop-color="#49c4f3"/><stop offset="1" stop-color="#8fe0ff"/></linearGradient>
 </defs>
 <path d="M20.29 176A116 113.500 0 1 1 219.71 176Z" fill="#2e393d" transform="translate(0,1.500)"/>
 <g clip-path="url(#gc107)">
  <rect x="0" y="0" width="240" height="113" fill="url(#gt107)"/>
  <rect x="0" y="113" width="240" height="80" fill="url(#gb107)"/>
  <circle cx="120" cy="118" r="79" fill="#4f5b5f" clip-path="url(#gu107)"/>
 </g>
 <clipPath id="gu107"><rect x="0" y="0" width="240" height="113"/></clipPath>
 <path d="M20.29 176A116 113.500 0 1 1 219.71 176Z" fill="none" stroke="#2d383c" stroke-width="2.800"/>
 <path d="M21.29 177.2H218.71" stroke="#66757a" stroke-width="1" opacity=".7"/>
 <g stroke="#43c6f4" stroke-linecap="butt" style="filter:drop-shadow(0 0 1.500px rgba(60,200,255,.8))"><line x1="41.19" y1="163.50" x2="32.10" y2="168.75" stroke-width="3"/><line x1="32.14" y1="149.98" x2="26.50" y2="152.03" stroke-width="1.6"/><line x1="27.92" y1="134.24" x2="22.01" y2="135.28" stroke-width="1.6"/><line x1="29.00" y1="118.00" x2="18.50" y2="118.00" stroke-width="3"/><line x1="27.92" y1="101.76" x2="22.01" y2="100.72" stroke-width="1.6"/><line x1="32.14" y1="86.02" x2="26.50" y2="83.97" stroke-width="1.6"/><line x1="41.19" y1="72.50" x2="32.10" y2="67.25" stroke-width="3"/><line x1="48.37" y1="57.90" x2="43.78" y2="54.04" stroke-width="1.6"/><line x1="59.90" y1="46.37" x2="56.04" y2="41.78" stroke-width="1.6"/><line x1="74.50" y1="39.19" x2="69.25" y2="30.10" stroke-width="3"/><line x1="88.02" y1="30.14" x2="85.97" y2="24.50" stroke-width="1.6"/><line x1="103.76" y1="25.92" x2="102.72" y2="20.01" stroke-width="1.6"/><line x1="120.00" y1="27.00" x2="120.00" y2="16.50" stroke-width="3"/><line x1="136.24" y1="25.92" x2="137.28" y2="20.01" stroke-width="1.6"/><line x1="151.98" y1="30.14" x2="154.03" y2="24.50" stroke-width="1.6"/><line x1="165.50" y1="39.19" x2="170.75" y2="30.10" stroke-width="3"/><line x1="180.10" y1="46.37" x2="183.96" y2="41.78" stroke-width="1.6"/><line x1="191.63" y1="57.90" x2="196.22" y2="54.04" stroke-width="1.6"/><line x1="198.81" y1="72.50" x2="207.90" y2="67.25" stroke-width="3"/><line x1="207.86" y1="86.02" x2="213.50" y2="83.97" stroke-width="1.6"/><line x1="212.08" y1="101.76" x2="217.99" y2="100.72" stroke-width="1.6"/><line x1="211.00" y1="118.00" x2="221.50" y2="118.00" stroke-width="3"/><line x1="212.08" y1="134.24" x2="217.99" y2="135.28" stroke-width="1.6"/><line x1="207.86" y1="149.98" x2="213.50" y2="152.03" stroke-width="1.6"/><line x1="198.81" y1="163.50" x2="207.90" y2="168.75" stroke-width="3"/></g>
 <path d="M44.22 161.75A87.500 87.500 0 1 1 195.78 161.75" fill="none" stroke="#7fd6f5" stroke-width="1.200" opacity=".9"/>
 <g fill="none" stroke-width="5.200"><path d="M48.73 159.15A82.300 82.300 0 0 1 45.66 153.30" stroke="rgb(40, 190, 229)"/><path d="M46.03 154.08A82.300 82.300 0 0 1 43.37 148.03" stroke="rgb(40, 190, 229)"/><path d="M43.69 148.83A82.300 82.300 0 0 1 41.47 142.61" stroke="rgb(40, 190, 228)"/><path d="M41.73 143.43A82.300 82.300 0 0 1 39.94 137.07" stroke="rgb(40, 191, 228)"/><path d="M40.14 137.91A82.300 82.300 0 0 1 38.81 131.44" stroke="rgb(40, 191, 228)"/><path d="M38.95 132.29A82.300 82.300 0 0 1 38.07 125.75" stroke="rgb(40, 191, 227)"/><path d="M38.15 126.60A82.300 82.300 0 0 1 37.72 120.01" stroke="rgb(40, 192, 227)"/><path d="M37.75 120.87A82.300 82.300 0 0 1 37.78 114.27" stroke="rgb(40, 192, 226)"/><path d="M37.75 115.13A82.300 82.300 0 0 1 38.25 108.54" stroke="rgb(40, 192, 226)"/><path d="M38.15 109.40A82.300 82.300 0 0 1 39.10 102.86" stroke="rgb(41, 193, 225)"/><path d="M38.95 103.71A82.300 82.300 0 0 1 40.36 97.25" stroke="rgb(41, 193, 225)"/><path d="M40.14 98.09A82.300 82.300 0 0 1 42.00 91.75" stroke="rgb(41, 193, 224)"/><path d="M41.73 92.57A82.300 82.300 0 0 1 44.02 86.37" stroke="rgb(41, 194, 224)"/><path d="M43.69 87.17A82.300 82.300 0 0 1 46.41 81.15" stroke="rgb(41, 194, 224)"/><path d="M46.03 81.92A82.300 82.300 0 0 1 49.16 76.11" stroke="rgb(41, 194, 223)"/><path d="M48.73 76.85A82.300 82.300 0 0 1 52.26 71.27" stroke="rgb(41, 195, 223)"/><path d="M51.77 71.98A82.300 82.300 0 0 1 55.68 66.65" stroke="rgb(41, 195, 222)"/><path d="M55.15 67.33A82.300 82.300 0 0 1 59.42 62.29" stroke="rgb(41, 195, 222)"/><path d="M58.84 62.93A82.300 82.300 0 0 1 63.45 58.20" stroke="rgb(42, 196, 220)"/><path d="M62.83 58.80A82.300 82.300 0 0 1 67.76 54.40" stroke="rgb(43, 196, 217)"/><path d="M67.10 54.95A82.300 82.300 0 0 1 72.33 50.91" stroke="rgb(44, 197, 213)"/><path d="M71.63 51.42A82.300 82.300 0 0 1 77.12 47.75" stroke="rgb(45, 197, 210)"/><path d="M76.39 48.21A82.300 82.300 0 0 1 82.13 44.93" stroke="rgb(46, 198, 207)"/><path d="M81.36 45.33A82.300 82.300 0 0 1 87.31 42.47" stroke="rgb(52, 200, 195)"/><path d="M86.53 42.82A82.300 82.300 0 0 1 92.66 40.37" stroke="rgb(58, 203, 184)"/><path d="M91.85 40.66A82.300 82.300 0 0 1 98.14 38.65" stroke="rgb(64, 206, 173)"/><path d="M97.32 38.89A82.300 82.300 0 0 1 103.73 37.32" stroke="rgb(74, 208, 160)"/><path d="M102.89 37.50A82.300 82.300 0 0 1 109.40 36.39" stroke="rgb(98, 212, 142)"/><path d="M108.55 36.50A82.300 82.300 0 0 1 115.12 35.84" stroke="rgb(122, 215, 124)"/><path d="M114.26 35.90A82.300 82.300 0 0 1 120.86 35.70" stroke="rgb(146, 218, 106)"/><path d="M120.00 35.70A82.300 82.300 0 0 1 126.60 35.97" stroke="rgb(166, 220, 95)"/><path d="M125.74 35.90A82.300 82.300 0 0 1 132.31 36.63" stroke="rgb(181, 221, 90)"/><path d="M131.45 36.50A82.300 82.300 0 0 1 137.95 37.68" stroke="rgb(196, 222, 84)"/><path d="M137.11 37.50A82.300 82.300 0 0 1 143.51 39.13" stroke="rgb(212, 223, 79)"/><path d="M142.68 38.89A82.300 82.300 0 0 1 148.96 40.96" stroke="rgb(220, 222, 76)"/><path d="M148.15 40.66A82.300 82.300 0 0 1 154.26 43.17" stroke="rgb(225, 220, 74)"/><path d="M153.47 42.82A82.300 82.300 0 0 1 159.40 45.74" stroke="rgb(230, 218, 72)"/><path d="M158.64 45.33A82.300 82.300 0 0 1 164.34 48.67" stroke="rgb(236, 216, 71)"/><path d="M163.61 48.21A82.300 82.300 0 0 1 169.07 51.93" stroke="rgb(237, 208, 69)"/><path d="M168.37 51.42A82.300 82.300 0 0 1 173.56 55.51" stroke="rgb(238, 201, 67)"/><path d="M172.90 54.95A82.300 82.300 0 0 1 177.79 59.40" stroke="rgb(239, 193, 65)"/><path d="M177.17 58.80A82.300 82.300 0 0 1 181.73 63.57" stroke="rgb(240, 185, 63)"/><path d="M181.16 62.93A82.300 82.300 0 0 1 185.38 68.01" stroke="rgb(240, 176, 61)"/><path d="M184.85 67.33A82.300 82.300 0 0 1 188.71 72.70" stroke="rgb(240, 167, 59)"/><path d="M188.23 71.98A82.300 82.300 0 0 1 191.70 77.60" stroke="rgb(240, 158, 57)"/><path d="M191.27 76.85A82.300 82.300 0 0 1 194.34 82.70" stroke="rgb(240, 150, 54)"/><path d="M193.97 81.92A82.300 82.300 0 0 1 196.63 87.97" stroke="rgb(240, 142, 52)"/><path d="M196.31 87.17A82.300 82.300 0 0 1 198.53 93.39" stroke="rgb(240, 134, 50)"/><path d="M198.27 92.57A82.300 82.300 0 0 1 200.06 98.93" stroke="rgb(240, 126, 48)"/><path d="M199.86 98.09A82.300 82.300 0 0 1 201.19 104.56" stroke="rgb(239, 117, 46)"/><path d="M201.05 103.71A82.300 82.300 0 0 1 201.93 110.25" stroke="rgb(239, 108, 43)"/><path d="M201.85 109.40A82.300 82.300 0 0 1 202.28 115.99" stroke="rgb(238, 99, 40)"/><path d="M202.25 115.13A82.300 82.300 0 0 1 202.22 121.73" stroke="rgb(238, 90, 38)"/><path d="M202.25 120.87A82.300 82.300 0 0 1 201.75 127.46" stroke="rgb(236, 77, 34)"/><path d="M201.85 126.60A82.300 82.300 0 0 1 200.90 133.14" stroke="rgb(235, 65, 30)"/><path d="M201.05 132.29A82.300 82.300 0 0 1 199.64 138.75" stroke="rgb(234, 53, 26)"/><path d="M199.86 137.91A82.300 82.300 0 0 1 198.00 144.25" stroke="rgb(233, 42, 23)"/><path d="M198.27 143.43A82.300 82.300 0 0 1 195.98 149.63" stroke="rgb(232, 37, 21)"/><path d="M196.31 148.83A82.300 82.300 0 0 1 193.59 154.85" stroke="rgb(231, 33, 20)"/><path d="M193.97 154.08A82.300 82.300 0 0 1 190.84 159.89" stroke="rgb(230, 28, 18)"/></g>
 <path d="M79.600 144.800L124.300 109.800L130.800 119.600Z" fill="url(#gn107)" style="filter:drop-shadow(0 0 2px rgba(80,200,255,.7))"/>
 <text x="117.8" y="167.5" text-anchor="middle" font-family="Liberation Sans" font-size="24" fill="#fff">0.00</text>
</svg>
<svg class="abs" style="left:418px;top:88px" width="240" height="190" viewBox="0 0 240 190">
 <defs>
  <clipPath id="gc418"><path d="M20.29 176A116 113.500 0 1 1 219.71 176Z"/></clipPath>
  <linearGradient id="gt418" x1="0" y1="0" x2="0" y2="1"><stop offset="0" stop-color="#57656a"/><stop offset="1" stop-color="#525f63"/></linearGradient>
  <linearGradient id="gb418" x1="0" y1="0" x2="0" y2="1"><stop offset="0" stop-color="#333f44"/><stop offset=".25" stop-color="#3b474c"/><stop offset="1" stop-color="#465357"/></linearGradient>
  <linearGradient id="gn418" gradientUnits="userSpaceOnUse" x1="79.3" y1="141.5" x2="130.4" y2="112.0"><stop offset="0" stop-color="#49c4f3"/><stop offset="1" stop-color="#8fe0ff"/></linearGradient>
 </defs>
 <path d="M20.29 176A116 113.500 0 1 1 219.71 176Z" fill="#2e393d" transform="translate(0,1.500)"/>
 <g clip-path="url(#gc418)">
  <rect x="0" y="0" width="240" height="113" fill="url(#gt418)"/>
  <rect x="0" y="113" width="240" height="80" fill="url(#gb418)"/>
  <circle cx="120" cy="118" r="79" fill="#4f5b5f" clip-path="url(#gu418)"/>
 </g>
 <clipPath id="gu418"><rect x="0" y="0" width="240" height="113"/></clipPath>
 <path d="M20.29 176A116 113.500 0 1 1 219.71 176Z" fill="none" stroke="#2d383c" stroke-width="2.800"/>
 <path d="M21.29 177.2H218.71" stroke="#66757a" stroke-width="1" opacity=".7"/>
 <g stroke="#43c6f4" stroke-linecap="butt" style="filter:drop-shadow(0 0 1.500px rgba(60,200,255,.8))"><line x1="41.19" y1="163.50" x2="32.10" y2="168.75" stroke-width="3"/><line x1="32.14" y1="149.98" x2="26.50" y2="152.03" stroke-width="1.6"/><line x1="27.92" y1="134.24" x2="22.01" y2="135.28" stroke-width="1.6"/><line x1="29.00" y1="118.00" x2="18.50" y2="118.00" stroke-width="3"/><line x1="27.92" y1="101.76" x2="22.01" y2="100.72" stroke-width="1.6"/><line x1="32.14" y1="86.02" x2="26.50" y2="83.97" stroke-width="1.6"/><line x1="41.19" y1="72.50" x2="32.10" y2="67.25" stroke-width="3"/><line x1="48.37" y1="57.90" x2="43.78" y2="54.04" stroke-width="1.6"/><line x1="59.90" y1="46.37" x2="56.04" y2="41.78" stroke-width="1.6"/><line x1="74.50" y1="39.19" x2="69.25" y2="30.10" stroke-width="3"/><line x1="88.02" y1="30.14" x2="85.97" y2="24.50" stroke-width="1.6"/><line x1="103.76" y1="25.92" x2="102.72" y2="20.01" stroke-width="1.6"/><line x1="120.00" y1="27.00" x2="120.00" y2="16.50" stroke-width="3"/><line x1="136.24" y1="25.92" x2="137.28" y2="20.01" stroke-width="1.6"/><line x1="151.98" y1="30.14" x2="154.03" y2="24.50" stroke-width="1.6"/><line x1="165.50" y1="39.19" x2="170.75" y2="30.10" stroke-width="3"/><line x1="180.10" y1="46.37" x2="183.96" y2="41.78" stroke-width="1.6"/><line x1="191.63" y1="57.90" x2="196.22" y2="54.04" stroke-width="1.6"/><line x1="198.81" y1="72.50" x2="207.90" y2="67.25" stroke-width="3"/><line x1="207.86" y1="86.02" x2="213.50" y2="83.97" stroke-width="1.6"/><line x1="212.08" y1="101.76" x2="217.99" y2="100.72" stroke-width="1.6"/><line x1="211.00" y1="118.00" x2="221.50" y2="118.00" stroke-width="3"/><line x1="212.08" y1="134.24" x2="217.99" y2="135.28" stroke-width="1.6"/><line x1="207.86" y1="149.98" x2="213.50" y2="152.03" stroke-width="1.6"/><line x1="198.81" y1="163.50" x2="207.90" y2="168.75" stroke-width="3"/></g>
 <path d="M44.22 161.75A87.500 87.500 0 1 1 195.78 161.75" fill="none" stroke="#7fd6f5" stroke-width="1.200" opacity=".9"/>
 <g fill="none" stroke-width="5.200"><path d="M48.73 159.15A82.300 82.300 0 0 1 45.66 153.30" stroke="rgb(40, 190, 229)"/><path d="M46.03 154.08A82.300 82.300 0 0 1 43.37 148.03" stroke="rgb(40, 190, 229)"/><path d="M43.69 148.83A82.300 82.300 0 0 1 41.47 142.61" stroke="rgb(40, 190, 228)"/><path d="M41.73 143.43A82.300 82.300 0 0 1 39.94 137.07" stroke="rgb(40, 191, 228)"/><path d="M40.14 137.91A82.300 82.300 0 0 1 38.81 131.44" stroke="rgb(40, 191, 228)"/><path d="M38.95 132.29A82.300 82.300 0 0 1 38.07 125.75" stroke="rgb(40, 191, 227)"/><path d="M38.15 126.60A82.300 82.300 0 0 1 37.72 120.01" stroke="rgb(40, 192, 227)"/><path d="M37.75 120.87A82.300 82.300 0 0 1 37.78 114.27" stroke="rgb(40, 192, 226)"/><path d="M37.75 115.13A82.300 82.300 0 0 1 38.25 108.54" stroke="rgb(40, 192, 226)"/><path d="M38.15 109.40A82.300 82.300 0 0 1 39.10 102.86" stroke="rgb(41, 193, 225)"/><path d="M38.95 103.71A82.300 82.300 0 0 1 40.36 97.25" stroke="rgb(41, 193, 225)"/><path d="M40.14 98.09A82.300 82.300 0 0 1 42.00 91.75" stroke="rgb(41, 193, 224)"/><path d="M41.73 92.57A82.300 82.300 0 0 1 44.02 86.37" stroke="rgb(41, 194, 224)"/><path d="M43.69 87.17A82.300 82.300 0 0 1 46.41 81.15" stroke="rgb(41, 194, 224)"/><path d="M46.03 81.92A82.300 82.300 0 0 1 49.16 76.11" stroke="rgb(41, 194, 223)"/><path d="M48.73 76.85A82.300 82.300 0 0 1 52.26 71.27" stroke="rgb(41, 195, 223)"/><path d="M51.77 71.98A82.300 82.300 0 0 1 55.68 66.65" stroke="rgb(41, 195, 222)"/><path d="M55.15 67.33A82.300 82.300 0 0 1 59.42 62.29" stroke="rgb(41, 195, 222)"/><path d="M58.84 62.93A82.300 82.300 0 0 1 63.45 58.20" stroke="rgb(42, 196, 220)"/><path d="M62.83 58.80A82.300 82.300 0 0 1 67.76 54.40" stroke="rgb(43, 196, 217)"/><path d="M67.10 54.95A82.300 82.300 0 0 1 72.33 50.91" stroke="rgb(44, 197, 213)"/><path d="M71.63 51.42A82.300 82.300 0 0 1 77.12 47.75" stroke="rgb(45, 197, 210)"/><path d="M76.39 48.21A82.300 82.300 0 0 1 82.13 44.93" stroke="rgb(46, 198, 207)"/><path d="M81.36 45.33A82.300 82.300 0 0 1 87.31 42.47" stroke="rgb(52, 200, 195)"/><path d="M86.53 42.82A82.300 82.300 0 0 1 92.66 40.37" stroke="rgb(58, 203, 184)"/><path d="M91.85 40.66A82.300 82.300 0 0 1 98.14 38.65" stroke="rgb(64, 206, 173)"/><path d="M97.32 38.89A82.300 82.300 0 0 1 103.73 37.32" stroke="rgb(74, 208, 160)"/><path d="M102.89 37.50A82.300 82.300 0 0 1 109.40 36.39" stroke="rgb(98, 212, 142)"/><path d="M108.55 36.50A82.300 82.300 0 0 1 115.12 35.84" stroke="rgb(122, 215, 124)"/><path d="M114.26 35.90A82.300 82.300 0 0 1 120.86 35.70" stroke="rgb(146, 218, 106)"/><path d="M120.00 35.70A82.300 82.300 0 0 1 126.60 35.97" stroke="rgb(166, 220, 95)"/><path d="M125.74 35.90A82.300 82.300 0 0 1 132.31 36.63" stroke="rgb(181, 221, 90)"/><path d="M131.45 36.50A82.300 82.300 0 0 1 137.95 37.68" stroke="rgb(196, 222, 84)"/><path d="M137.11 37.50A82.300 82.300 0 0 1 143.51 39.13" stroke="rgb(212, 223, 79)"/><path d="M142.68 38.89A82.300 82.300 0 0 1 148.96 40.96" stroke="rgb(220, 222, 76)"/><path d="M148.15 40.66A82.300 82.300 0 0 1 154.26 43.17" stroke="rgb(225, 220, 74)"/><path d="M153.47 42.82A82.300 82.300 0 0 1 159.40 45.74" stroke="rgb(230, 218, 72)"/><path d="M158.64 45.33A82.300 82.300 0 0 1 164.34 48.67" stroke="rgb(236, 216, 71)"/><path d="M163.61 48.21A82.300 82.300 0 0 1 169.07 51.93" stroke="rgb(237, 208, 69)"/><path d="M168.37 51.42A82.300 82.300 0 0 1 173.56 55.51" stroke="rgb(238, 201, 67)"/><path d="M172.90 54.95A82.300 82.300 0 0 1 177.79 59.40" stroke="rgb(239, 193, 65)"/><path d="M177.17 58.80A82.300 82.300 0 0 1 181.73 63.57" stroke="rgb(240, 185, 63)"/><path d="M181.16 62.93A82.300 82.300 0 0 1 185.38 68.01" stroke="rgb(240, 176, 61)"/><path d="M184.85 67.33A82.300 82.300 0 0 1 188.71 72.70" stroke="rgb(240, 167, 59)"/><path d="M188.23 71.98A82.300 82.300 0 0 1 191.70 77.60" stroke="rgb(240, 158, 57)"/><path d="M191.27 76.85A82.300 82.300 0 0 1 194.34 82.70" stroke="rgb(240, 150, 54)"/><path d="M193.97 81.92A82.300 82.300 0 0 1 196.63 87.97" stroke="rgb(240, 142, 52)"/><path d="M196.31 87.17A82.300 82.300 0 0 1 198.53 93.39" stroke="rgb(240, 134, 50)"/><path d="M198.27 92.57A82.300 82.300 0 0 1 200.06 98.93" stroke="rgb(240, 126, 48)"/><path d="M199.86 98.09A82.300 82.300 0 0 1 201.19 104.56" stroke="rgb(239, 117, 46)"/><path d="M201.05 103.71A82.300 82.300 0 0 1 201.93 110.25" stroke="rgb(239, 108, 43)"/><path d="M201.85 109.40A82.300 82.300 0 0 1 202.28 115.99" stroke="rgb(238, 99, 40)"/><path d="M202.25 115.13A82.300 82.300 0 0 1 202.22 121.73" stroke="rgb(238, 90, 38)"/><path d="M202.25 120.87A82.300 82.300 0 0 1 201.75 127.46" stroke="rgb(236, 77, 34)"/><path d="M201.85 126.60A82.300 82.300 0 0 1 200.90 133.14" stroke="rgb(235, 65, 30)"/><path d="M201.05 132.29A82.300 82.300 0 0 1 199.64 138.75" stroke="rgb(234, 53, 26)"/><path d="M199.86 137.91A82.300 82.300 0 0 1 198.00 144.25" stroke="rgb(233, 42, 23)"/><path d="M198.27 143.43A82.300 82.300 0 0 1 195.98 149.63" stroke="rgb(232, 37, 21)"/><path d="M196.31 148.83A82.300 82.300 0 0 1 193.59 154.85" stroke="rgb(231, 33, 20)"/><path d="M193.97 154.08A82.300 82.300 0 0 1 190.84 159.89" stroke="rgb(230, 28, 18)"/></g>
 <path d="M79.600 144.800L124.300 109.800L130.800 119.600Z" fill="url(#gn418)" style="filter:drop-shadow(0 0 2px rgba(80,200,255,.7))"/>
 <text x="120.8" y="167.5" text-anchor="middle" font-family="Liberation Sans" font-size="24" fill="#fff">0.00</text>
</svg><!--G1-->
  <div class="abs" id="scala" style="left:609px;top:282px;font-size:14px;line-height:18px">Scala</div>
  <div class="dd" style="left:652px;top:277px;width:94px"><span>Automatico</span><svg class="abs" style="left:80px;top:6px" width="8" height="13" viewBox="0 0 8 13" fill="#fff"><path d="M4 1l3 4.200H1zM4 12l3-4.200H1z"/></svg></div>
  <div class="lg" style="left:265px;width:100px"><i style="background:#ee1c12"></i><span style="margin-left:32px">Massimo</span></div>
  <div class="lg" style="left:369px;width:90px"><i style="background:#f08a14"></i><span style="margin-left:32px">Alto</span></div>
  <div class="lg" style="left:463px;width:90px"><i style="background:#f2d911"></i><span style="margin-left:32px">Medio</span></div>
  <div class="lg" style="left:557px;width:90px"><i style="background:#7c7f80"></i><span style="margin-left:30px">predefinite</span></div>
  <div class="lg" style="left:651px;width:100px"><i style="background:#58c7f4"></i><span style="margin-left:32px">Minimo</span></div>
    <div class="row" style="top:350px"><div class="dev"><svg class="abs" style="left:6px;top:13px" width="40" height="28" viewBox="-2 0 40 28" fill="none" stroke="#fff" stroke-width="2.600" stroke-linecap="round" stroke-linejoin="round"><path d="M-.5 24h9.500M3.200 24V4a2.500 2.500 0 0 1 2.500-2.500H34.300"/><rect x="26" y="7.400" width="9.600" height="16.400" rx="1"/><circle cx="15.500" cy="16.700" r="4.900" fill="#fff" stroke="none"/><rect x="12.400" y="8.600" width="6.200" height="16.600" rx="1.200" fill="#fff" stroke="none"/><circle cx="15.500" cy="16.700" r="2.200" fill="#5b6c73" stroke="none"/></svg></div><div class="mac">E6:70:D7:7E:CC:57</div>
   <div class="bar" style="top:18px"></div><div class="bar" style="top:41px"></div>
   <div class="val" style="top:14px">0.00 Mb</div><div class="val" style="top:37px">0.00 Mb</div>
   <svg class="abs" style="left:722px;top:18px" width="14" height="9" viewBox="0 0 14 9"><path d="M1 8.500L7 .8l6 7.700z" fill="#92defc"/></svg>
   <svg class="abs" style="left:722px;top:40px" width="14" height="9" viewBox="0 0 14 9"><path d="M1 .5L7 8.200 13 .5z" fill="#92defc"/></svg>
  </div>
  <div class="row" style="top:416px"><div class="dev"><svg class="abs" style="left:6px;top:13px" width="40" height="28" viewBox="-2 0 40 28" fill="none" stroke="#fff" stroke-width="2.600" stroke-linecap="round" stroke-linejoin="round"><path d="M-.5 24h9.500M3.200 24V4a2.500 2.500 0 0 1 2.500-2.500H34.300"/><rect x="26" y="7.400" width="9.600" height="16.400" rx="1"/><circle cx="15.500" cy="16.700" r="4.900" fill="#fff" stroke="none"/><rect x="12.400" y="8.600" width="6.200" height="16.600" rx="1.200" fill="#fff" stroke="none"/><circle cx="15.500" cy="16.700" r="2.200" fill="#5b6c73" stroke="none"/></svg></div><div class="mac">4A:BF:FC:17:64:78</div>
   <div class="bar" style="top:18px"></div><div class="bar" style="top:41px"></div>
   <div class="val" style="top:14px">0.00 Mb</div><div class="val" style="top:37px">0.00 Mb</div>
   <svg class="abs" style="left:722px;top:18px" width="14" height="9" viewBox="0 0 14 9"><path d="M1 8.500L7 .8l6 7.700z" fill="#92defc"/></svg>
   <svg class="abs" style="left:722px;top:40px" width="14" height="9" viewBox="0 0 14 9"><path d="M1 .5L7 8.200 13 .5z" fill="#92defc"/></svg>
  </div>
  <div class="row last" style="top:482px"><div class="dev"><svg class="abs" style="left:6px;top:13px" width="40" height="28" viewBox="-2 0 40 28" fill="none" stroke="#fff" stroke-width="2.600" stroke-linecap="round" stroke-linejoin="round"><path d="M-.5 24h9.500M3.200 24V4a2.500 2.500 0 0 1 2.500-2.500H34.300"/><rect x="26" y="7.400" width="9.600" height="16.400" rx="1"/><circle cx="15.500" cy="16.700" r="4.900" fill="#fff" stroke="none"/><rect x="12.400" y="8.600" width="6.200" height="16.600" rx="1.200" fill="#fff" stroke="none"/><circle cx="15.500" cy="16.700" r="2.200" fill="#5b6c73" stroke="none"/></svg></div><div class="mac">DA:32:F6:05:2A:14</div>
   <div class="bar" style="top:18px"></div><div class="bar" style="top:41px"></div>
   <div class="val" style="top:14px">0.00 Mb</div><div class="val" style="top:37px">0.00 Mb</div>
   <svg class="abs" style="left:722px;top:18px" width="14" height="9" viewBox="0 0 14 9"><path d="M1 8.500L7 .8l6 7.700z" fill="#92defc"/></svg>
   <svg class="abs" style="left:722px;top:40px" width="14" height="9" viewBox="0 0 14 9"><path d="M1 .5L7 8.200 13 .5z" fill="#92defc"/></svg>
  </div>

 </div>
 <div class="abs" style="left:971px;top:42px;width:8px;height:860px;background:#000"></div>

</div>

  <div id="sbtrack"></div><div id="sbthumb"></div>
 </div>
</div></div>
</body>
</html>
